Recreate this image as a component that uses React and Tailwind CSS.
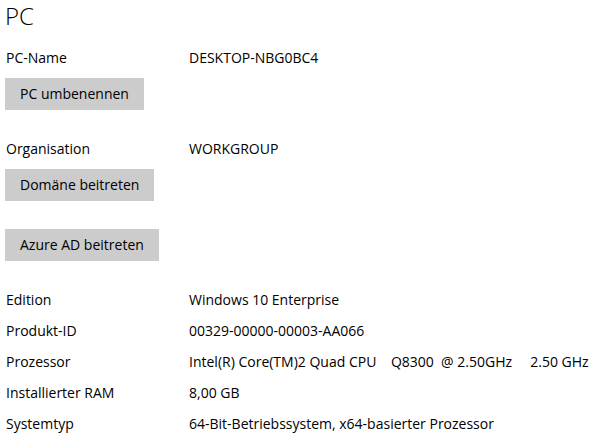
import React from "react";

const Info = ({ label, value }) => (
  <div className="flex h-[31px] items-center leading-[31px]">
    <div className="w-[184px] shrink-0 pl-[1px]">{label}</div>
    <div className="whitespace-pre">{value}</div>
  </div>
);

const Btn = ({ children }) => (
  <button className="block h-[32px] bg-[#cccccc] px-[15px] text-[14px] leading-[32px] text-black">
    {children}
  </button>
);

const App = () => {
  const specs = [
    ["Edition", "Windows 10 Enterprise"],
    ["Produkt-ID", "00329-00000-00003-AA066"],
    ["Prozessor", "Intel(R) Core(TM)2 Quad CPU    Q8300  @ 2.50GHz     2.50 GHz"],
    ["Installierter RAM", "8,00 GB"],
    ["Systemtyp", "64-Bit-Betriebssystem, x64-basierter Prozessor"],
  ];

  return (
    <div className="min-h-screen bg-white pl-[5px] text-[14px] text-black font-['Open_Sans',sans-serif]">
      <h1 className="-mt-[1px] text-[24px] font-light leading-[33px]">PC</h1>

      <div className="mt-[16px] flex h-[20px] items-center leading-[20px]">
        <div className="w-[184px] shrink-0 pl-[1px]">PC-Name</div>
        <div>DESKTOP-NBG0BC4</div>
      </div>
      <div className="mt-[10px]">
        <Btn>PC umbenennen</Btn>
      </div>

      <div className="mt-[29px] flex h-[20px] items-center leading-[20px]">
        <div className="w-[184px] shrink-0 pl-[1px]">Organisation</div>
        <div>WORKGROUP</div>
      </div>
      <div className="mt-[10px]">
        <Btn>Domäne beitreten</Btn>
      </div>
      <div className="mt-[28px]">
        <Btn>Azure AD beitreten</Btn>
      </div>

      <div className="mt-[23px]">
        {specs.map(([label, value]) => (
          <Info key={label} label={label} value={value} />
        ))}
      </div>
    </div>
  );
};

export default App;
